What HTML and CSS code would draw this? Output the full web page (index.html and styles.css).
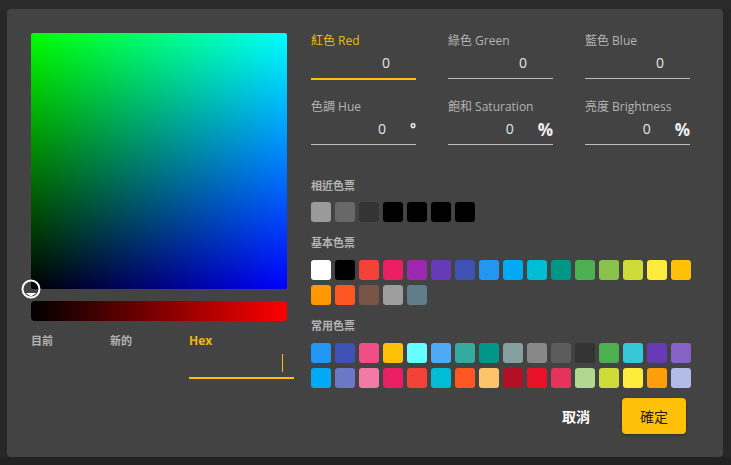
FILE: index.html
```html
<!DOCTYPE html>
<html lang="zh-Hant">
<head>
<meta charset="utf-8">
<title>Color Picker</title>
<link rel="stylesheet" href="styles.css">
</head>
<body>
<div class="dialog">
  <div class="left">
    <div class="sv">
      <svg class="cursor" width="20" height="20" viewBox="0 0 20 20">
        <circle cx="10" cy="10" r="8.5" fill="none" stroke="#ffffff" stroke-width="2"/>
        <polygon points="4.5,14 15.5,14 10,17.5" fill="#ffffff"/>
      </svg>
    </div>
    <div class="hue"></div>
    <div class="meta">
      <div class="meta-col"><div class="meta-label">目前</div></div>
      <div class="meta-col"><div class="meta-label">新的</div></div>
      <div class="meta-col">
        <div class="meta-label gold">Hex</div>
        <div class="hex-box"><span class="caret"></span></div>
      </div>
    </div>
  </div>
  <div class="right">
    <div class="fields">
      <div class="field active">
        <div class="field-label">紅色 Red</div>
        <div class="field-box"><span class="val">0</span></div>
      </div>
      <div class="field">
        <div class="field-label">綠色 Green</div>
        <div class="field-box"><span class="val">0</span></div>
      </div>
      <div class="field">
        <div class="field-label">藍色 Blue</div>
        <div class="field-box"><span class="val">0</span></div>
      </div>
      <div class="field">
        <div class="field-label">色調 Hue</div>
        <div class="field-box"><span class="val with-suffix">0</span><span class="deg">°</span></div>
      </div>
      <div class="field">
        <div class="field-label">飽和 Saturation</div>
        <div class="field-box"><span class="val with-suffix">0</span><span class="pct">%</span></div>
      </div>
      <div class="field">
        <div class="field-label">亮度 Brightness</div>
        <div class="field-box"><span class="val with-suffix">0</span><span class="pct">%</span></div>
      </div>
    </div>

    <div class="section-label first">相近色票</div>
    <div class="swatches">
      <span class="sw" style="background:#9a9a9a"></span>
      <span class="sw" style="background:#686868"></span>
      <span class="sw" style="background:#343434"></span>
      <span class="sw" style="background:#000000"></span>
      <span class="sw" style="background:#000000"></span>
      <span class="sw" style="background:#000000"></span>
      <span class="sw" style="background:#000000"></span>
    </div>

    <div class="section-label">基本色票</div>
    <div class="swatches">
      <span class="sw" style="background:#ffffff"></span>
      <span class="sw" style="background:#000000"></span>
      <span class="sw" style="background:#f44336"></span>
      <span class="sw" style="background:#e91e63"></span>
      <span class="sw" style="background:#9c27b0"></span>
      <span class="sw" style="background:#673ab7"></span>
      <span class="sw" style="background:#3f51b5"></span>
      <span class="sw" style="background:#2196f3"></span>
      <span class="sw" style="background:#03a9f4"></span>
      <span class="sw" style="background:#00bcd4"></span>
      <span class="sw" style="background:#009688"></span>
      <span class="sw" style="background:#4caf50"></span>
      <span class="sw" style="background:#8bc34a"></span>
      <span class="sw" style="background:#cddc39"></span>
      <span class="sw" style="background:#ffeb3b"></span>
      <span class="sw" style="background:#ffc107"></span>
      <span class="sw" style="background:#ff9800"></span>
      <span class="sw" style="background:#ff5722"></span>
      <span class="sw" style="background:#795548"></span>
      <span class="sw" style="background:#9e9e9e"></span>
      <span class="sw" style="background:#607d8b"></span>
    </div>

    <div class="section-label">常用色票</div>
    <div class="swatches">
      <span class="sw" style="background:#2196f3"></span>
      <span class="sw" style="background:#3f51b5"></span>
      <span class="sw" style="background:#f04e84"></span>
      <span class="sw" style="background:#ffc107"></span>
      <span class="sw" style="background:#66ffff"></span>
      <span class="sw" style="background:#4eaaf5"></span>
      <span class="sw" style="background:#35aa9e"></span>
      <span class="sw" style="background:#009688"></span>
      <span class="sw" style="background:#85a09e"></span>
      <span class="sw" style="background:#888888"></span>
      <span class="sw" style="background:#5c5c5c"></span>
      <span class="sw" style="background:#333333"></span>
      <span class="sw" style="background:#4caf50"></span>
      <span class="sw" style="background:#35c8d9"></span>
      <span class="sw" style="background:#673ab7"></span>
      <span class="sw" style="background:#8662c6"></span>
      <span class="sw" style="background:#03a9f4"></span>
      <span class="sw" style="background:#6b78c7"></span>
      <span class="sw" style="background:#f27aa4"></span>
      <span class="sw" style="background:#e91e63"></span>
      <span class="sw" style="background:#f44336"></span>
      <span class="sw" style="background:#00bcd4"></span>
      <span class="sw" style="background:#ff5722"></span>
      <span class="sw" style="background:#ffc36b"></span>
      <span class="sw" style="background:#b31028"></span>
      <span class="sw" style="background:#e81128"></span>
      <span class="sw" style="background:#e6335d"></span>
      <span class="sw" style="background:#b1d88f"></span>
      <span class="sw" style="background:#cddc39"></span>
      <span class="sw" style="background:#ffeb3b"></span>
      <span class="sw" style="background:#ffa00a"></span>
      <span class="sw" style="background:#b3bce6"></span>
    </div>

    <div class="actions">
      <button class="btn cancel">取消</button>
      <button class="btn ok">確定</button>
    </div>
  </div>
</div>
</body>
</html>
```

FILE: styles.css
```css
* { box-sizing: border-box; }

html, body {
  margin: 0;
  padding: 0;
}

body {
  width: 731px;
  height: 465px;
  overflow: hidden;
  background: linear-gradient(to bottom, #2b2b2b 0, #2b2b2b 9px, #272727 9px, #272727 457px, #222222 457px);
  font-family: "Open Sans", "Noto Sans CJK TC", sans-serif;
  padding: 9px 0 0 7px;
}

.dialog {
  width: 716px;
  height: 448px;
  background: #434343;
  border-radius: 4px;
  padding: 24px 33px 0 24px;
  display: flex;
  gap: 24px;
}

/* left column */
.left {
  flex: 0 0 256px;
  width: 256px;
}

.sv {
  position: relative;
  width: 256px;
  height: 256px;
  border-radius: 2px;
  background:
    linear-gradient(to bottom, #00ff00, #000000),
    linear-gradient(to right, #000000, #0000ff);
  background-blend-mode: screen;
}

.cursor {
  position: absolute;
  left: -10px;
  bottom: -10px;
  display: block;
}

.hue {
  margin-top: 12px;
  height: 20px;
  border-radius: 4px;
  background: linear-gradient(to right, #000000, #ff0000);
}

.meta {
  margin-top: 12px;
  display: grid;
  grid-template-columns: 79px 79px 105px;
}

.meta-label {
  font-size: 11px;
  font-weight: 700;
  line-height: 16px;
  color: #b4b4b4;
}

.meta-label.gold {
  font-size: 12px;
  color: #f2b90c;
}

.hex-box {
  height: 30px;
  border-bottom: 2px solid #ffc107;
  display: flex;
  justify-content: flex-end;
  align-items: center;
  padding-right: 11px;
}

.caret {
  width: 1px;
  height: 18px;
  background: #ffc107;
}

/* right column */
.right {
  flex: 1;
}

.fields {
  display: grid;
  grid-template-columns: repeat(3, 105px);
  column-gap: 32px;
  row-gap: 19px;
}

.field-label {
  font-size: 12px;
  line-height: 16px;
  color: #b4b4b4;
}

.field.active .field-label {
  color: #f2b90c;
}

.field-box {
  height: 30px;
  border-bottom: 1px solid #bdbdbd;
  text-align: right;
  line-height: 26px;
  padding-bottom: 3px;
  color: #e6e6e6;
  white-space: nowrap;
}

.field.active .field-box {
  height: 31px;
  border-bottom: 2px solid #ffc107;
}

.val {
  font-size: 14px;
  margin-right: 26px;
}

.val.with-suffix {
  margin-right: 24px;
}

.deg {
  font-size: 14px;
  font-weight: 700;
  color: #f0f0f0;
}

.pct {
  font-size: 17px;
  font-weight: 700;
  color: #f0f0f0;
  vertical-align: -2px;
}

.section-label {
  margin-top: 13px;
  margin-bottom: 9px;
  font-size: 11px;
  font-weight: 700;
  line-height: 16px;
  color: #b4b4b4;
}

.section-label.first {
  margin-top: 33px;
  margin-bottom: 8px;
}

.swatches {
  display: grid;
  grid-template-columns: repeat(16, 20px);
  column-gap: 4px;
  row-gap: 5px;
}

.sw {
  display: block;
  width: 20px;
  height: 20px;
  border-radius: 3px;
}

.actions {
  margin-top: 10px;
  padding-right: 5px;
  display: flex;
  justify-content: flex-end;
  gap: 14px;
}

.btn {
  width: 64px;
  height: 36px;
  border: none;
  border-radius: 4px;
  font-family: "Open Sans", "Noto Sans CJK TC", sans-serif;
  font-size: 14px;
  padding: 0;
  cursor: pointer;
}

.btn.cancel {
  background: transparent;
  color: #ffffff;
  font-weight: 700;
}

.btn.ok {
  background: #ffc107;
  color: #222222;
  box-shadow: 0 1px 3px rgba(0, 0, 0, 0.35);
}
```
